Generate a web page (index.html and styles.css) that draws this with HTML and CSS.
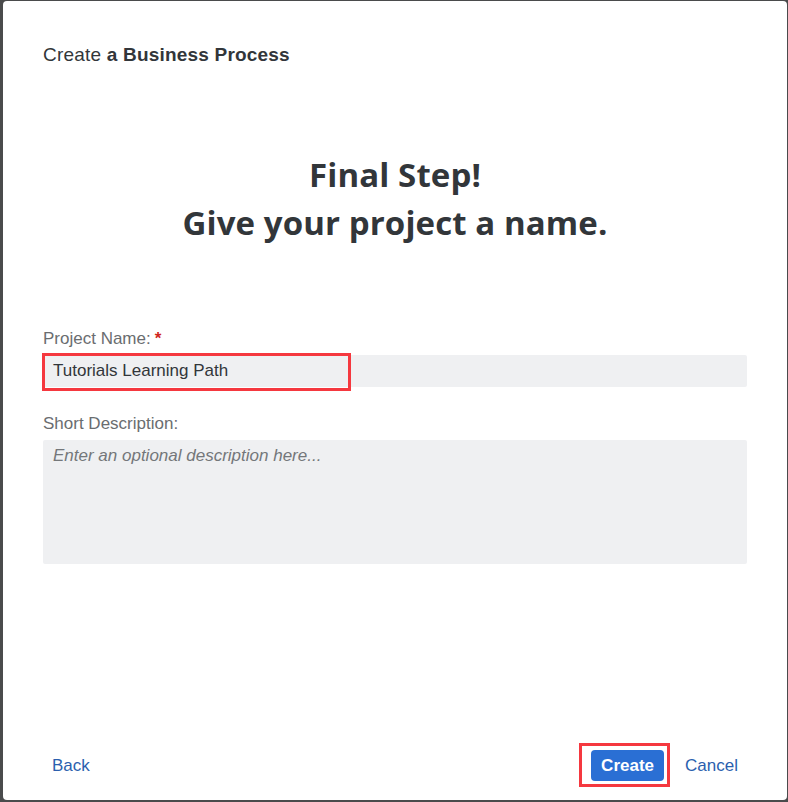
FILE: index.html
```html
<!DOCTYPE html>
<html>
<head>
<meta charset="utf-8">
<link rel="stylesheet" href="styles.css">
</head>
<body>
<div class="dialog">
  <div class="header">Create <b>a Business Process</b></div>
  <h1 class="title">Final Step!<br>Give your project a name.</h1>
  <div class="form">
    <label class="label">Project Name:<span class="req">*</span></label>
    <div class="input-wrap">
      <div class="input">Tutorials Learning Path</div>
      <div class="highlight hl-input"></div>
    </div>
    <label class="label label-2">Short Description:</label>
    <div class="textarea">Enter an optional description here...</div>
  </div>
  <div class="footer">
    <a class="link back">Back</a>
    <div class="actions">
      <div class="btn-wrap">
        <button class="btn-primary">Create</button>
        <div class="highlight hl-btn"></div>
      </div>
      <a class="link cancel">Cancel</a>
    </div>
  </div>
</div>
</body>
</html>
```

FILE: styles.css
```css
html, body {
  margin: 0;
  padding: 0;
  height: 100%;
}
body {
  background: #4a4b4c;
  font-family: "Liberation Sans", Arial, sans-serif;
  padding: 1px 1px 2px 3px;
  box-sizing: border-box;
}
.dialog {
  background: #ffffff;
  height: 799px;
  border-radius: 4px;
  box-sizing: border-box;
  padding: 42px 40px 0 40px;
  display: flex;
  flex-direction: column;
}
.header {
  font-size: 19px;
  line-height: 24px;
  color: #32363a;
  letter-spacing: 0.2px;
}
.header b {
  font-weight: 700;
}
.title {
  margin: 84px 0 0 0;
  text-align: center;
  font-family: "Open Sans", sans-serif;
  font-weight: 700;
  font-size: 33px;
  line-height: 48px;
  color: #32363a;
  letter-spacing: 0.1px;
}
.form {
  margin-top: 82px;
  display: flex;
  flex-direction: column;
}
.label {
  font-size: 17px;
  line-height: 20px;
  color: #6a6d70;
  margin-bottom: 6px;
}
.label-2 {
  margin-top: 27px;
}
.req {
  color: #d0271d;
  margin-left: 4px;
  font-weight: 700;
}
.input-wrap {
  position: relative;
}
.input {
  background: #eff0f2;
  height: 32px;
  border-radius: 2px;
  font-size: 17px;
  line-height: 32px;
  padding: 0 10px;
  color: #32363a;
}
.textarea {
  background: #eff0f2;
  height: 124px;
  border-radius: 2px;
  font-size: 17px;
  line-height: 20px;
  padding: 6px 10px;
  box-sizing: border-box;
  color: #74777a;
  font-style: italic;
}
.highlight {
  position: absolute;
  border: 3px solid #f5383f;
  box-sizing: border-box;
  pointer-events: none;
}
.hl-input {
  left: -1px;
  top: -2px;
  width: 309px;
  height: 38px;
}
.footer {
  margin-top: auto;
  height: 50px;
  display: flex;
  align-items: flex-start;
  justify-content: space-between;
  padding: 0 9px 0 9px;
}
.link {
  color: #2b5fae;
  font-size: 17px;
  line-height: 32px;
}
.actions {
  display: flex;
  align-items: flex-start;
  gap: 21px;
}
.btn-wrap {
  position: relative;
}
.btn-primary {
  display: block;
  background: #2a6fd4;
  color: #ffffff;
  border: none;
  border-radius: 4px;
  font-family: "Liberation Sans", Arial, sans-serif;
  font-weight: 700;
  font-size: 17px;
  width: 73px;
  height: 31px;
  padding: 0;
}
.hl-btn {
  left: -12px;
  right: -6px;
  top: -7px;
  bottom: -6px;
}
```
